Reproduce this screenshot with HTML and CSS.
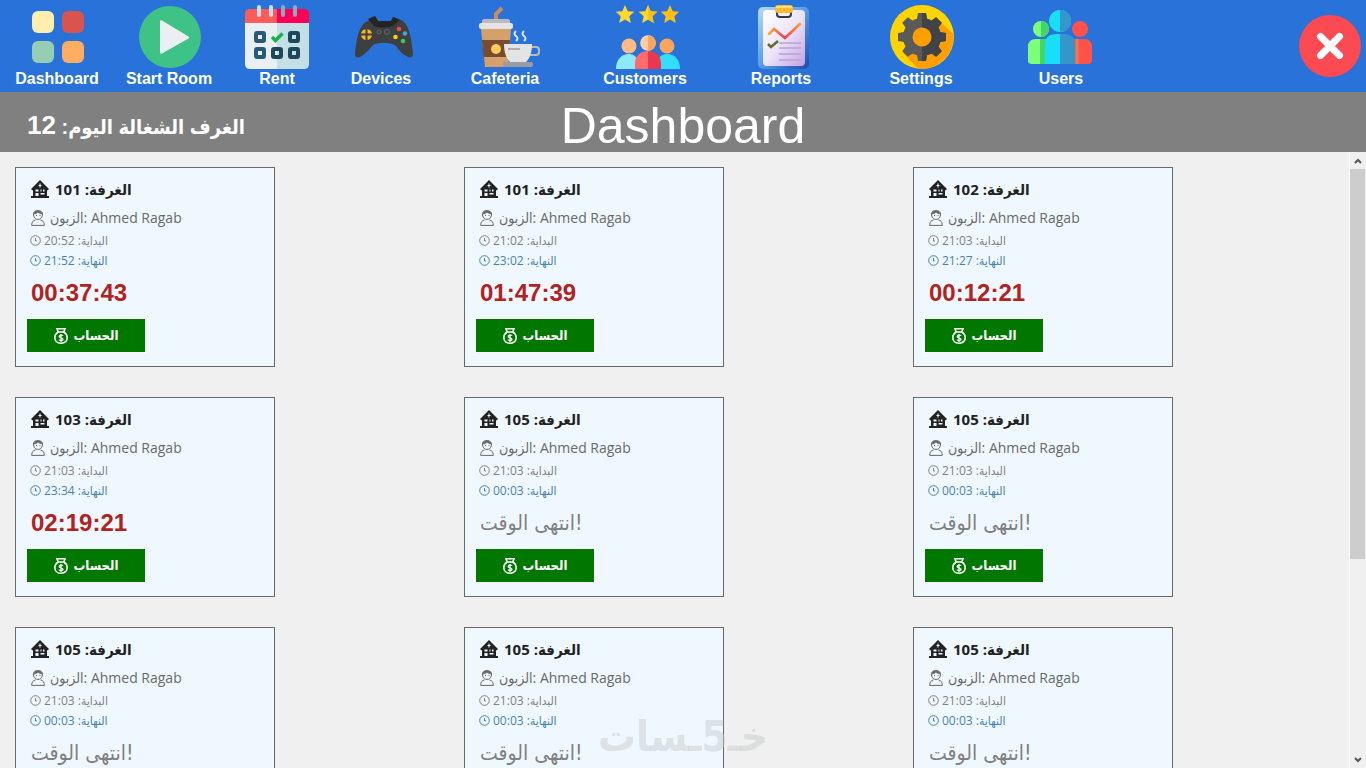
FILE: index.html
```html
<!DOCTYPE html>
<html lang="en">
<head>
    <meta charset="UTF-8">
    <meta name="viewport" content="width=device-width, initial-scale=1.0">
    <title>Dashboard</title>
    <link rel="stylesheet" href="styles.css">
</head>
<body>
    <!-- Shared card icons -->
    <svg class="sprite" aria-hidden="true">
        <symbol id="house" viewBox="0 0 18 18">
            <path d="M0 9 9 0l9 9-1.500 1.500L16 10v6h2v2H0v-2h2v-6l-.5.500z" fill="currentColor"/>
            <path d="M8.500 3.500h1V5h1v1h-1v1.500h-1V6h-1V5h1zM4.500 9.500h3v2h-3zM4.500 13h3v3h-3zM9.500 9.500h1v2h-1zM12 9.500h1.500v2H12zM9.500 13h4v1.500h-4z" fill="#f0f8ff"/>
        </symbol>
        <symbol id="person" viewBox="0 0 14 16">
            <path d="M2.500 5C2 1.500 4.500.6 7 .6S12 1.800 11.500 5C11 8.400 9 9.400 7 9.400S3 8.400 2.500 5zM.7 15.400c0-3.400 1.300-4.900 3.800-5.400M13.300 15.400c0-3.400-1.300-4.900-3.800-5.400M.7 15.400h12.600" fill="none" stroke="currentColor"/>
            <path d="M2.500 4.500C3 1 5 .4 7 .4s4 .6 4.500 4C9.500 4 8 3.600 7 2.600c-1 1.200-2.500 1.700-4.500 1.900z" fill="currentColor"/>
            <path d="M5 5.500h1M8.500 5.500h1" stroke="currentColor"/>
        </symbol>
        <symbol id="clock" viewBox="0 0 11 11">
            <circle cx="5.500" cy="5.500" r="4.800" fill="none" stroke="currentColor"/>
            <path d="M5.500 3v3h1.500" fill="none" stroke="currentColor"/>
        </symbol>
        <symbol id="bag" viewBox="0 0 14 16">
            <path d="M3 .8h8L9.800 4H4.200zM4.200 4h5.600c2.200 1.300 3.400 3.200 3.400 5.600 0 3.600-2.300 5.600-6.200 5.600S.8 13.200.8 9.600C.8 7.200 2 5.300 4.200 4z" fill="none" stroke="currentColor" stroke-width="1.600"/>
            <path d="M9 7.800C8.600 7 5.200 6.800 5.200 8.400S9 9.500 9 11.200 5.400 12.800 5 11.600M7 6v8" fill="none" stroke="currentColor" stroke-width="1.300"/>
        </symbol>
    </svg>

    <header class="top-bar">
        <nav class="menu">
            <button class="menu-item">
                <svg viewBox="0 0 64 64">
                    <rect x="7" y="6" width="22" height="22" rx="6" fill="#ffeead"/>
                    <rect x="37" y="6" width="22" height="22" rx="6" fill="#d9534f"/>
                    <rect x="7" y="36" width="22" height="22" rx="6" fill="#96ceb4"/>
                    <rect x="37" y="36" width="22" height="22" rx="6" fill="#ffad60"/>
                </svg>
                <span>Dashboard</span>
            </button>
            <button class="menu-item">
                <svg viewBox="0 0 64 64">
                    <circle cx="33" cy="32" r="31" fill="#3ec285"/>
                    <path d="M23 16.500v31c0 1 1 1.500 2 1l26.500-15c1-.6 1-1.400 0-2l-26.500-16c-1-.5-2 0-2 1z" fill="#e9eff2"/>
                </svg>
                <span>Start Room</span>
            </button>
            <button class="menu-item">
                <svg viewBox="0 0 64 64">
                    <path d="M0 18h32v46H5q-5 0-5-5z" fill="#e9eff2"/>
                    <path d="M32 18h32v41q0 5-5 5H32z" fill="#c4dfe5"/>
                    <path d="M0 18V9q0-5 5-5h27v14z" fill="#ff5b5b"/>
                    <path d="M32 4h27q5 0 5 5v9H32z" fill="#ff0059"/>
                    <path d="M14 2v8M26 2v8" stroke="#c4dfe5" stroke-width="4" stroke-linecap="round"/>
                    <path d="M38 2v8M50 2v8" stroke="#8fa9c0" stroke-width="4" stroke-linecap="round"/>
                    <g fill="none" stroke="#265a78" stroke-width="4">
                        <rect x="11" y="28" width="8" height="8" rx="1"/>
                        <rect x="11" y="44" width="8" height="8" rx="1"/>
                    </g>
                    <g fill="none" stroke="#1e475b" stroke-width="4">
                        <rect x="28" y="44" width="8" height="8" rx="1"/>
                        <rect x="45" y="28" width="8" height="8" rx="1"/>
                        <rect x="45" y="44" width="8" height="8" rx="1"/>
                    </g>
                    <path d="M27 32l3.500 3.500 7-7" fill="none" stroke="#13b34a" stroke-width="3.500"/>
                </svg>
                <span>Rent</span>
            </button>
            <button class="menu-item">
                <svg viewBox="0 0 64 64">
                    <path d="M19 15l7-4 3 5h13l3-4 7 3c7 3 10 14 12 34 0 3-2 4-5 3-5-2-9-7-13-12-8-3-15-3-22 0-5 6-9 10-13 12-4 1-5 0-5-3 2-20 5-31 15-34z" fill="#3e3f40"/>
                    <path d="M19 14l7-3 3 5h13l2-4 7 3-7 6c-6 2-13 2-19 0z" fill="#232425"/>
                    <circle cx="17.500" cy="29.500" r="5.500" fill="#f9b916"/>
                    <path d="M17.500 23v13M11 29.500h13" stroke="#3e3f40" stroke-width="2"/>
                    <circle cx="50" cy="24" r="2.300" fill="#ef4c3c"/>
                    <circle cx="56" cy="28.500" r="2.300" fill="#3ca8d9"/>
                    <circle cx="46.500" cy="32" r="2.300" fill="#fccb1b"/>
                    <circle cx="54" cy="36" r="2.300" fill="#39c957"/>
                    <g fill="none" stroke="#666">
                        <circle cx="30" cy="27" r="2"/>
                        <circle cx="38" cy="27" r="2.500"/>
                    </g>
                </svg>
                <span>Devices</span>
            </button>
            <button class="menu-item">
                <svg viewBox="0 0 64 64">
                    <path d="M23 15V9l6-6" fill="none" stroke="#c98d55" stroke-width="4"/>
                    <path d="M8 24h30l-3 38H12z" fill="#d4a06c"/>
                    <path d="M9 35h28l-1.500 17h-25z" fill="#784c30"/>
                    <rect x="9" y="14" width="28" height="6" rx="2" fill="#b9bbc0"/>
                    <rect x="6" y="18" width="34" height="6" rx="2" fill="#e3e5e4"/>
                    <circle cx="23" cy="44" r="5" fill="#ffcd5b"/>
                    <path d="M58 42h5q3 0 3 3v2q0 3-3 3h-6" fill="none" stroke="#b9bbc0" stroke-width="2"/>
                    <path d="M31 39h28c0 8-2 14-6 18H37c-4-4-6-10-6-18z" fill="#e3e5e4"/>
                    <path d="M35 44h12" stroke="#b9a9a6" stroke-width="2"/>
                    <rect x="30" y="57" width="30" height="5" rx="2" fill="#999da1"/>
                    <path d="M43 26q-3 3 0 5t0 5M51 26q-3 3 0 5t0 5" fill="none" stroke="#dfe6ea" stroke-width="2"/>
                </svg>
                <span>Cafeteria</span>
            </button>
            <button class="menu-item">
                <svg viewBox="0 0 64 64">
                    <g fill="#ffd92e">
                        <path d="M12 0l2.700 6.200 6.600.6-5 4.500 1.500 6.700-5.800-3.500L6.200 18l1.500-6.700-5-4.500 6.600-.6z"/>
                        <path d="M35 0l2.700 6.200 6.600.6-5 4.500 1.500 6.700-5.800-3.500-5.800 3.500 1.500-6.700-5-4.500 6.600-.6z"/>
                    </g>
                    <g fill="#ffc00e">
                        <path d="M35 0l2.700 6.200 6.600.6-5 4.500 1.500 6.700-5.800-3.500z"/>
                        <path d="M57 0l2.700 6.200 6.600.6-5 4.500 1.500 6.700-5.800-3.500-5.800 3.500 1.500-6.700-5-4.500 6.600-.6z"/>
                    </g>
                    <circle cx="16" cy="41" r="7.500" fill="#ffbb85"/>
                    <circle cx="54" cy="41" r="7.500" fill="#ffa45f"/>
                    <path d="M3 64c0-9 5-15 13-15 5 0 8 3 8 7v8z" fill="#8ee9ff"/>
                    <path d="M46 64V53c2-3 5-4 8-4 8 0 13 6 13 15z" fill="#33defc"/>
                    <circle cx="35" cy="38" r="7.800" fill="#ffd0a5"/>
                    <path d="M35 30.200a7.800 7.800 0 0 1 0 15.600z" fill="#ffa45f"/>
                    <path d="M22 64v-5c0-8 5-13 13-13v18z" fill="#ff6a6b"/>
                    <path d="M35 46c8 0 13 5 13 13v5H35z" fill="#e9374f"/>
                </svg>
                <span>Customers</span>
            </button>
            <button class="menu-item">
                <svg viewBox="0 0 64 64">
                    <defs>
                        <linearGradient id="board" x2="1" y2="1">
                            <stop stop-color="#b7dcff"/>
                            <stop offset=".5" stop-color="#579be8"/>
                            <stop offset="1" stop-color="#2148ad"/>
                        </linearGradient>
                        <linearGradient id="paper" x2="1" y2="1">
                            <stop stop-color="#ffffff"/>
                            <stop offset=".5" stop-color="#ece5f8"/>
                            <stop offset="1" stop-color="#c3a1e3"/>
                        </linearGradient>
                        <linearGradient id="trend">
                            <stop stop-color="#ffae2e"/>
                            <stop offset=".5" stop-color="#f03e55"/>
                            <stop offset="1" stop-color="#ff9d24"/>
                        </linearGradient>
                    </defs>
                    <rect x="9" y="2" width="51" height="62" rx="5" fill="url(#board)"/>
                    <rect x="14" y="5" width="42" height="56" rx="4" fill="url(#paper)"/>
                    <path d="M28 7v2q0 3 3 3h8q3 0 3-3V7" fill="none" stroke="#343647" stroke-width="2"/>
                    <rect x="26" y="0" width="18" height="8" rx="3" fill="#ffb92e"/>
                    <path d="M27 2h16" stroke="#ffdc70" stroke-width="2"/>
                    <path d="M20 29l5-5 11 9 15-14" fill="none" stroke="url(#trend)" stroke-width="2.500" stroke-linecap="round"/>
                    <path d="M19 39l3 3 7-6" fill="none" stroke="#626b32" stroke-width="2.500"/>
                    <path d="M30 38h22M30 43h22M30 49h22M30 55h22" stroke="#b9a2d8" stroke-width="1.500"/>
                </svg>
                <span>Reports</span>
            </button>
            <button class="menu-item">
                <svg viewBox="0 0 64 64">
                    <defs>
                        <path id="tooth" d="M29 8h8l1 6v36l-1 6h-8l-1-6V14z"/>
                        <g id="gear">
                            <circle cx="33" cy="32" r="19"/>
                            <use href="#tooth"/>
                            <use href="#tooth" transform="rotate(45 33 32)"/>
                            <use href="#tooth" transform="rotate(90 33 32)"/>
                            <use href="#tooth" transform="rotate(135 33 32)"/>
                        </g>
                        <clipPath id="right-half"><path d="M33 0h32v64H33z"/></clipPath>
                    </defs>
                    <circle cx="33" cy="32" r="32" fill="#ffd400"/>
                    <path d="M49 15l15.500 14A32 32 0 0 1 29 63.700L14 48z" fill="#ff9f00"/>
                    <use href="#gear" fill="#5a5a58"/>
                    <use href="#gear" fill="#404347" clip-path="url(#right-half)"/>
                    <circle cx="33" cy="32" r="9.500" fill="#ff9f00"/>
                </svg>
                <span>Settings</span>
            </button>
            <button class="menu-item">
                <svg viewBox="0 0 64 64">
                    <circle cx="12" cy="24" r="8" fill="#7dff78"/>
                    <path d="M12 16a8 8 0 0 1 0 16z" fill="#3fd766"/>
                    <circle cx="51" cy="24" r="8" fill="#ff524b"/>
                    <path d="M-1 56V42q0-8 8-8h12v25H3q-4 0-4-3z" fill="#7dff78"/>
                    <path d="M11 34h8v25h-8z" fill="#3fd766"/>
                    <path d="M44 34h11q8 0 8 8v13q0 4-4 4H44z" fill="#ff524b"/>
                    <path d="M48 34v25" stroke="#e97b58" stroke-width="3"/>
                    <circle cx="31" cy="16" r="11" fill="#18defc"/>
                    <path d="M31 5a11 11 0 0 1 0 22z" fill="#3596ca"/>
                    <path d="M16 59V40q0-11 11-11h4v30z" fill="#18defc"/>
                    <path d="M31 29h4q11 0 11 11v19H31z" fill="#3596ca"/>
                </svg>
                <span>Users</span>
            </button>
        </nav>
        <button class="close-btn" aria-label="Close">
            <svg viewBox="0 0 62 62">
                <circle cx="31" cy="31" r="31" fill="#fb4a52"/>
                <path d="M21.500 21.500l19 19M40.500 21.500l-19 19" stroke="#fff" stroke-width="7" stroke-linecap="round"/>
            </svg>
        </button>
    </header>

    <div class="title-bar">
        <p class="busy-rooms" dir="rtl" lang="ar">الغرف الشغالة اليوم: <span>12</span></p>
        <h1>Dashboard</h1>
    </div>

    <div class="content">
        <main class="rooms">
            <section class="card">
                <h2><svg><use href="#house"/></svg><span>الغرفة: 101</span></h2>
                <p class="client"><svg><use href="#person"/></svg><span>الزبون: Ahmed Ragab</span></p>
                <p class="time"><svg><use href="#clock"/></svg><span>البداية: 20:52</span></p>
                <p class="time end"><svg><use href="#clock"/></svg><span>النهاية: 21:52</span></p>
                <p class="timer">00:37:43</p>
                <button class="bill"><svg><use href="#bag"/></svg><span>الحساب</span></button>
            </section>
            <section class="card">
                <h2><svg><use href="#house"/></svg><span>الغرفة: 101</span></h2>
                <p class="client"><svg><use href="#person"/></svg><span>الزبون: Ahmed Ragab</span></p>
                <p class="time"><svg><use href="#clock"/></svg><span>البداية: 21:02</span></p>
                <p class="time end"><svg><use href="#clock"/></svg><span>النهاية: 23:02</span></p>
                <p class="timer">01:47:39</p>
                <button class="bill"><svg><use href="#bag"/></svg><span>الحساب</span></button>
            </section>
            <section class="card">
                <h2><svg><use href="#house"/></svg><span>الغرفة: 102</span></h2>
                <p class="client"><svg><use href="#person"/></svg><span>الزبون: Ahmed Ragab</span></p>
                <p class="time"><svg><use href="#clock"/></svg><span>البداية: 21:03</span></p>
                <p class="time end"><svg><use href="#clock"/></svg><span>النهاية: 21:27</span></p>
                <p class="timer">00:12:21</p>
                <button class="bill"><svg><use href="#bag"/></svg><span>الحساب</span></button>
            </section>
            <section class="card">
                <h2><svg><use href="#house"/></svg><span>الغرفة: 103</span></h2>
                <p class="client"><svg><use href="#person"/></svg><span>الزبون: Ahmed Ragab</span></p>
                <p class="time"><svg><use href="#clock"/></svg><span>البداية: 21:03</span></p>
                <p class="time end"><svg><use href="#clock"/></svg><span>النهاية: 23:34</span></p>
                <p class="timer">02:19:21</p>
                <button class="bill"><svg><use href="#bag"/></svg><span>الحساب</span></button>
            </section>
            <section class="card">
                <h2><svg><use href="#house"/></svg><span>الغرفة: 105</span></h2>
                <p class="client"><svg><use href="#person"/></svg><span>الزبون: Ahmed Ragab</span></p>
                <p class="time"><svg><use href="#clock"/></svg><span>البداية: 21:03</span></p>
                <p class="time end"><svg><use href="#clock"/></svg><span>النهاية: 00:03</span></p>
                <p class="timer over">انتهى الوقت!</p>
                <button class="bill"><svg><use href="#bag"/></svg><span>الحساب</span></button>
            </section>
            <section class="card">
                <h2><svg><use href="#house"/></svg><span>الغرفة: 105</span></h2>
                <p class="client"><svg><use href="#person"/></svg><span>الزبون: Ahmed Ragab</span></p>
                <p class="time"><svg><use href="#clock"/></svg><span>البداية: 21:03</span></p>
                <p class="time end"><svg><use href="#clock"/></svg><span>النهاية: 00:03</span></p>
                <p class="timer over">انتهى الوقت!</p>
                <button class="bill"><svg><use href="#bag"/></svg><span>الحساب</span></button>
            </section>
            <section class="card">
                <h2><svg><use href="#house"/></svg><span>الغرفة: 105</span></h2>
                <p class="client"><svg><use href="#person"/></svg><span>الزبون: Ahmed Ragab</span></p>
                <p class="time"><svg><use href="#clock"/></svg><span>البداية: 21:03</span></p>
                <p class="time end"><svg><use href="#clock"/></svg><span>النهاية: 00:03</span></p>
                <p class="timer over">انتهى الوقت!</p>
                <button class="bill"><svg><use href="#bag"/></svg><span>الحساب</span></button>
            </section>
            <section class="card">
                <h2><svg><use href="#house"/></svg><span>الغرفة: 105</span></h2>
                <p class="client"><svg><use href="#person"/></svg><span>الزبون: Ahmed Ragab</span></p>
                <p class="time"><svg><use href="#clock"/></svg><span>البداية: 21:03</span></p>
                <p class="time end"><svg><use href="#clock"/></svg><span>النهاية: 00:03</span></p>
                <p class="timer over">انتهى الوقت!</p>
                <button class="bill"><svg><use href="#bag"/></svg><span>الحساب</span></button>
            </section>
            <section class="card">
                <h2><svg><use href="#house"/></svg><span>الغرفة: 105</span></h2>
                <p class="client"><svg><use href="#person"/></svg><span>الزبون: Ahmed Ragab</span></p>
                <p class="time"><svg><use href="#clock"/></svg><span>البداية: 21:03</span></p>
                <p class="time end"><svg><use href="#clock"/></svg><span>النهاية: 00:03</span></p>
                <p class="timer over">انتهى الوقت!</p>
                <button class="bill"><svg><use href="#bag"/></svg><span>الحساب</span></button>
            </section>
        </main>
        <div class="scrollbar">
            <button aria-label="Scroll up"><svg viewBox="0 0 8 6"><path d="M1 5l3-3 3 3" fill="none" stroke="#555" stroke-width="2"/></svg></button>
            <div class="track"><div class="thumb"></div></div>
            <button aria-label="Scroll down"><svg viewBox="0 0 8 6"><path d="M1 1l3 3 3-3" fill="none" stroke="#555" stroke-width="2"/></svg></button>
        </div>
    </div>

    <div class="watermark" dir="rtl" lang="ar">خـ5ـسات</div>
</body>
</html>
```
FILE: styles.css
```css
/* Global styles */
* {
    margin: 0;
    padding: 0;
    box-sizing: border-box;
}

body {
    display: flex;
    flex-direction: column;
    height: 100vh;
    overflow: hidden;
    background-color: #f0f0f0;
    font-family: "Open Sans", "DejaVu Sans Condensed", "DejaVu Sans", sans-serif;
}

button {
    border: none;
    background: none;
    cursor: pointer;
}

svg {
    flex: none;
    overflow: visible;
}

.sprite {
    position: absolute;
    width: 0;
    height: 0;
}

/* Top menu */
.top-bar {
    display: flex;
    flex: none;
    justify-content: space-between;
    align-items: center;
    height: 92px;
    padding: 0 5px 0 1px;
    background-color: #2872d9;
}

.menu {
    display: grid;
    grid-template-columns: 112px 112px 104px 104px 144px 136px 136px 144px 136px;
    padding-top: 2px;
}

.menu-item {
    display: flex;
    flex-direction: column;
    align-items: center;
    color: #fff;
    font: bold 16px/20px "Liberation Sans", Arial, sans-serif;
}

.menu-item svg {
    width: 64px;
    height: 64px;
}

.close-btn svg {
    display: block;
    width: 62px;
    height: 62px;
}

/* Grey title bar */
.title-bar {
    display: grid;
    grid-template-columns: 1fr auto 1fr;
    align-items: center;
    flex: none;
    height: 60px;
    padding-top: 8px;
    background-color: #808080;
    color: #fff;
    font-family: "Liberation Sans", "DejaVu Sans Condensed", "DejaVu Sans", sans-serif;
}

.title-bar h1 {
    font-size: 50px;
    font-weight: normal;
    line-height: 52px;
}

.busy-rooms {
    justify-self: start;
    padding-left: 27px;
    font-size: 20px;
    font-weight: bold;
    line-height: 32px;
}

.busy-rooms span {
    font-size: 26px;
}

/* Rooms */
.content {
    display: flex;
    flex: 1;
    min-height: 0;
}

.rooms {
    display: grid;
    grid-template-columns: repeat(3, 1fr);
    align-content: start;
    row-gap: 30px;
    flex: 1;
    padding: 15px 2px 0 0;
    overflow-y: auto;
    scrollbar-width: none;
}

.card {
    width: 260px;
    height: 200px;
    margin-left: 15px;
    padding: 8px 11px;
    border: 1px solid #696969;
    background-color: #f0f8ff;
}

.card h2,
.card p {
    display: flex;
    align-items: center;
    padding-left: 4px;
    white-space: nowrap;
}

.card h2 {
    gap: 6px;
    height: 26px;
    color: #222;
    font-size: 15px;
}

.card h2 svg {
    width: 18px;
    height: 18px;
}

.card .client {
    gap: 5px;
    height: 28px;
    padding-top: 3px;
    color: #696969;
    font-size: 14px;
}

.client svg {
    width: 14px;
    height: 16px;
}

.card .time {
    gap: 3px;
    height: 20px;
    padding-left: 3px;
    color: #808080;
    font-size: 12px;
}

.time svg {
    width: 11px;
    height: 11px;
}

.card .end {
    color: #4682b4;
}

.card .timer {
    height: 46px;
    margin-bottom: 3px;
    color: #b22222;
    font: bold 24px/46px "Liberation Sans", sans-serif;
}

.card .over {
    color: #808080;
    font: 21px/46px "DejaVu Sans Condensed", "DejaVu Sans", sans-serif;
}

.bill {
    display: flex;
    justify-content: center;
    align-items: center;
    gap: 6px;
    width: 118px;
    height: 33px;
    outline: 1px solid #fff;
    background-color: #007800;
    color: #fff;
    font: bold 13px/20px "DejaVu Sans Condensed", "DejaVu Sans", sans-serif;
}

.bill svg {
    width: 14px;
    height: 16px;
}

/* Scrollbar */
.scrollbar {
    display: flex;
    flex-direction: column;
    width: 17px;
    padding-right: 1px;
    border-left: 1px solid #fff;
}

.scrollbar button {
    display: flex;
    justify-content: center;
    align-items: center;
    height: 17px;
}

.scrollbar svg {
    width: 8px;
    height: 6px;
}

.track {
    flex: 1;
}

.thumb {
    height: 67%;
    background-color: #cdcdcd;
}

.watermark {
    position: fixed;
    bottom: 6px;
    left: 50%;
    transform: translateX(-50%);
    color: rgba(200, 203, 203, 0.5);
    font: bold 42px/50px "DejaVu Sans Condensed", "DejaVu Sans", sans-serif;
    pointer-events: none;
}
```
